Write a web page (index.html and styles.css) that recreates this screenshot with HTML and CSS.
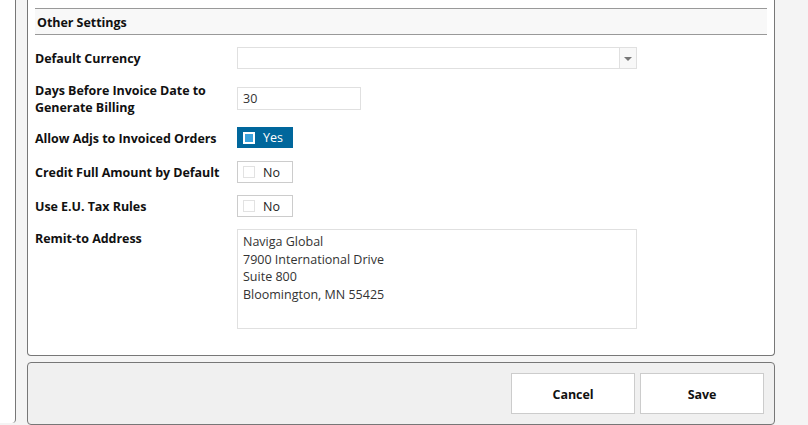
FILE: index.html
```html
<!DOCTYPE html>
<html>
<head>
<meta charset="utf-8">
<link rel="stylesheet" href="styles.css">
</head>
<body>
<div class="page">
  <div class="sidebar"></div>
  <div class="main">
    <div class="panel">
      <div class="section-head">Other Settings</div>
      <div class="form">
        <div class="row">
          <div class="label">Default Currency</div>
          <div class="select">
            <div class="select-value"></div>
            <div class="select-btn"><span class="arrow"></span></div>
          </div>
        </div>
        <div class="row row-tall">
          <div class="label">Days Before Invoice Date to<br>Generate Billing</div>
          <div class="input">30</div>
        </div>
        <div class="row">
          <div class="label">Allow Adjs to Invoiced Orders</div>
          <div class="toggle on"><span class="box"></span><span class="tl">Yes</span></div>
        </div>
        <div class="row">
          <div class="label">Credit Full Amount by Default</div>
          <div class="toggle"><span class="box"></span><span class="tl">No</span></div>
        </div>
        <div class="row">
          <div class="label">Use E.U. Tax Rules</div>
          <div class="toggle"><span class="box"></span><span class="tl">No</span></div>
        </div>
        <div class="row row-top">
          <div class="label">Remit-to Address</div>
          <div class="textarea">Naviga Global<br>7900 International Drive<br>Suite 800<br>Bloomington, MN 55425</div>
        </div>
      </div>
    </div>
    <div class="footer">
      <button class="btn">Cancel</button>
      <button class="btn">Save</button>
    </div>
  </div>
</div>
</body>
</html>
```
FILE: styles.css
```css
html, body {
  margin: 0;
  padding: 0;
  height: 100%;
  overflow: hidden;
}
body {
  background: #f4f4f4;
  font-family: "Open Sans", "Noto Sans", sans-serif;
  color: #111;
}
.page {
  display: flex;
  height: 425px;
}
.sidebar {
  width: 15px;
  height: 423px;
  background: #fff;
  border-right: 1px solid #777;
  border-bottom-right-radius: 4px;
  flex: none;
}
.main {
  width: 748px;
  margin-left: 11px;
  display: flex;
  flex-direction: column;
}
.panel {
  background: #fff;
  border: 1px solid #777;
  border-top: none;
  border-radius: 0 0 4px 4px;
  padding: 8px 7px 26px 7px;
  height: 322px;
}
.section-head {
  height: 25px;
  border-top: 1px solid #999;
  border-bottom: 1px solid #999;
  background: #f8f8f8;
  font-weight: 700;
  font-size: 12.5px;
  line-height: 27px;
  padding-left: 2px;
  letter-spacing: -0.05px;
}
.form {
  display: flex;
  flex-direction: column;
  gap: 12px;
  padding-top: 12px;
}
.row {
  display: flex;
  align-items: center;
  min-height: 22px;
}
.row-tall {
  height: 34px;
}
.row-top {
  align-items: flex-start;
}
.label {
  width: 202px;
  flex: none;
  font-weight: 700;
  font-size: 12.5px;
  line-height: 17px;
  letter-spacing: -0.05px;
  color: #111;
  padding-top: 1px;
  box-sizing: border-box;
}
.row-tall .label {
  height: 34px;
}
.select {
  width: 398px;
  height: 20px;
  border: 1px solid #e0e0e0;
  display: flex;
}
.select-value {
  flex: 1;
}
.select-btn {
  width: 16px;
  border-left: 1px solid #e0e0e0;
  background: #f8f8f8;
  display: flex;
  align-items: center;
  justify-content: center;
}
.arrow {
  width: 0;
  height: 0;
  border-left: 4px solid transparent;
  border-right: 4px solid transparent;
  border-top: 4px solid #777;
  margin-top: 1px;
}
.input {
  width: 117px;
  height: 21px;
  border: 1px solid #e0e0e0;
  padding-left: 5px;
  font-size: 12.5px;
  line-height: 21px;
  color: #333;
}
.toggle {
  width: 54px;
  height: 20px;
  border: 1px solid #ccc;
  background: #fff;
  display: flex;
  align-items: center;
  box-sizing: content-box;
}
.toggle .box {
  width: 10px;
  height: 10px;
  border: 1px solid #e2e2e2;
  margin-left: 5px;
  flex: none;
}
.toggle .tl {
  margin-left: 8px;
  font-size: 12.5px;
  color: #222;
}
.toggle.on {
  background: #00679c;
  border-color: #00679c;
  height: 19px;
  margin-top: -1px;
}
.toggle.on .box {
  width: 8px;
  height: 8px;
  border: 2px solid #fff;
  background: #3ba3dd;
}
.toggle.on .tl {
  color: #fff;
}
.textarea {
  width: 388px;
  height: 95px;
  border: 1px solid #e0e0e0;
  padding: 3px 5px 0 5px;
  font-size: 12.5px;
  line-height: 17.5px;
  color: #333;
}
.footer {
  margin-top: 6px;
  background: #f0f0f0;
  border: 1px solid #777;
  border-radius: 4px;
  height: 41px;
  padding: 10px 10px 10px 0;
  display: flex;
  justify-content: flex-end;
  gap: 5px;
}
.btn {
  width: 124px;
  height: 41px;
  border: 1px solid #ccc;
  background: #fff;
  font-family: "Open Sans", "Noto Sans", sans-serif;
  font-weight: 700;
  font-size: 12.5px;
  color: #111;
  padding: 2px 0 0 0;
  letter-spacing: -0.05px;
}
```
